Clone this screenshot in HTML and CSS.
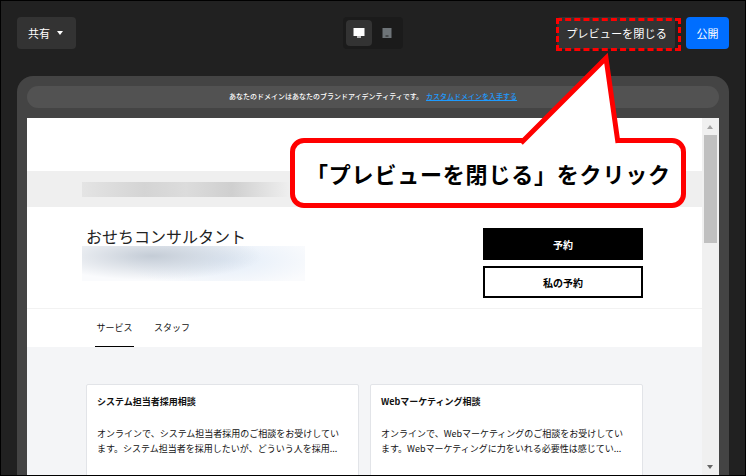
FILE: index.html
```html
<!DOCTYPE html>
<html lang="ja">
<head>
    <meta charset="UTF-8">
    <title>プレビュー</title>
    <link rel="stylesheet" href="styles.css">
</head>
<body>
    <div class="shot">
        <!-- ツールバー -->
        <header class="toolbar">
            <button class="tool-btn share-btn">共有 <span class="caret"></span></button>
            <div class="device-switch">
                <span class="device-btn active">
                    <svg width="12" height="12" viewBox="0 0 12 12"><path d="M.5 1h11v8H.5z" fill="#fff"/><path d="M4 9h4v2H4z" fill="#bbb"/></svg>
                </span>
                <span class="device-btn">
                    <svg width="10" height="12" viewBox="0 0 10 12"><path d="M.5 1h9v10h-9z" fill="#6e7478"/><path d="M3.5 8.500h3v1h-3z" fill="#222"/></svg>
                </span>
            </div>
            <div class="toolbar-right">
                <button class="tool-btn close-btn">プレビューを閉じる</button>
                <button class="tool-btn publish-btn">公開</button>
            </div>
        </header>

        <!-- プレビュー枠 -->
        <div class="preview-frame">
            <div class="domain-bar">
                あなたのドメインはあなたのブランドアイデンティティです。<a href="#">カスタムドメインを入手する</a>
            </div>
            <div class="preview-window">
                <div class="page">
                    <div class="page-top"></div>
                    <div class="page-strip"><div class="blur-gray"></div></div>
                    <div class="page-head">
                        <div class="head-text">
                            <h1>おせちコンサルタント</h1>
                            <div class="blur-blue"></div>
                        </div>
                        <div class="head-actions">
                            <button class="book-btn">予約</button>
                            <button class="book-btn outline">私の予約</button>
                        </div>
                    </div>
                    <nav class="tabs">
                        <span class="tab current">サービス</span>
                        <span class="tab">スタッフ</span>
                    </nav>
                    <div class="services">
                        <div class="service-card">
                            <h2>システム担当者採用相談</h2>
                            <p>オンラインで、システム担当者採用のご相談をお受けしてい<br>ます。システム担当者を採用したいが、どういう人を採用...</p>
                        </div>
                        <div class="service-card">
                            <h2>Webマーケティング相談</h2>
                            <p>オンラインで、Webマーケティングのご相談をお受けしてい<br>ます。Webマーケティングに力をいれる必要性は感じてい...</p>
                        </div>
                    </div>
                </div>
                <div class="scrollbar">
                    <span class="arrow up"></span>
                    <span class="thumb"></span>
                    <span class="arrow down"></span>
                </div>
            </div>
        </div>

        <!-- 注釈 -->
        <div class="dash-box"></div>
        <div class="callout">
            <svg class="callout-tail" width="120" height="100" viewBox="0 0 120 100">
                <path d="M10 95 L95 10 L107 95" fill="#fff" stroke="#f00" stroke-width="5"/>
            </svg>
            <p class="callout-text">「プレビューを閉じる」をクリック</p>
        </div>
    </div>
</body>
</html>
```

FILE: styles.css
```css
* {
    box-sizing: border-box;
}

body {
    margin: 0;
    font-family: "Noto Sans CJK JP", "Liberation Sans", sans-serif;
}

.shot {
    position: relative;
    width: 746px;
    height: 476px;
    overflow: hidden;
    background: #212121;
    border: 1px solid #000;
    display: flex;
    flex-direction: column;
}

/* ツールバー */
.toolbar {
    height: 75px;
    flex-shrink: 0;
    padding: 16px 16px 0;
    display: flex;
    justify-content: space-between;
    align-items: flex-start;
    position: relative;
}

.tool-btn {
    height: 32px;
    border: none;
    border-radius: 4px;
    background: #333;
    color: #fff;
    font-family: inherit;
    font-size: 11px;
    padding: 0 11px;
    white-space: nowrap;
}

.share-btn {
    width: 59px;
    display: flex;
    align-items: center;
    gap: 7px;
}

.caret {
    border-width: 4px 3.5px 0;
    border-style: solid;
    border-color: #fff transparent transparent;
}

.device-switch {
    position: absolute;
    left: 342px;
    top: 16px;
    display: flex;
    gap: 2px;
    padding: 3px;
    background: #1b1b1b;
    border-radius: 4px;
}

.device-btn {
    width: 26px;
    height: 26px;
    border-radius: 4px;
    display: flex;
    align-items: center;
    justify-content: center;
}

.device-btn.active {
    background: #333;
}

.toolbar-right {
    display: flex;
    gap: 11px;
}

.close-btn {
    width: 118px;
    padding: 0 0 0 1px;
    font-size: 11.2px;
}

.publish-btn {
    width: 43px;
    background: #006eff;
    padding: 0;
}

/* プレビュー枠 */
.preview-frame {
    margin: 0 16px;
    flex: 1;
    min-height: 0;
    background: #444;
    border-radius: 16px 16px 0 0;
    padding: 10px 10px 0;
    display: flex;
    flex-direction: column;
}

.domain-bar {
    height: 22px;
    margin-bottom: 10px;
    border-radius: 11px;
    background: #525252;
    color: #fff;
    font-size: 7px;
    font-weight: 500;
    line-height: 21px;
    text-align: center;
    flex-shrink: 0;
}

.domain-bar a {
    color: #1e9bff;
    margin-left: 3px;
}

.preview-window {
    flex: 1;
    min-height: 0;
    display: flex;
    background: #fff;
    overflow: hidden;
}

.page {
    flex: 1;
    min-width: 0;
    overflow: hidden;
}

.page-top {
    height: 53px;
}

.page-strip {
    height: 36px;
    background: #efefef;
    padding: 11px 0 0 55px;
}

.blur-gray {
    width: 208px;
    height: 15px;
    background: linear-gradient(90deg, #e4e4e4, #d4d4d4 30%, #dcdcdc 50%, #cfcfcf 72%, #efefef);
}

.page-head {
    height: 101px;
    padding: 20px 59px 0;
    display: flex;
    justify-content: space-between;
}

.head-text {
    margin-left: -4px;
}

.head-text h1 {
    margin: 0;
    padding-left: 4px;
    font-size: 16px;
    font-weight: 400;
    line-height: 19px;
    color: #222;
}

.blur-blue {
    width: 223px;
    height: 35px;
    background:
        radial-gradient(ellipse 110px 24px at 70px 10px, #c4ccd6, rgba(205, 214, 226, 0)),
        radial-gradient(ellipse 100px 28px at 140px 14px, #e2ecf8, rgba(255, 255, 255, 0)),
        #fafbfd;
}

.head-actions {
    width: 160px;
    margin-top: 1px;
    display: flex;
    flex-direction: column;
    gap: 6px;
}

.book-btn {
    height: 32px;
    background: #000;
    color: #fff;
    border: 2px solid #000;
    font-family: inherit;
    font-size: 10px;
    font-weight: 700;
}

.book-btn.outline {
    background: #fff;
    color: #000;
}

.tabs {
    height: 39px;
    border-top: 1px solid #f2f2f2;
    padding-left: 68px;
    display: flex;
    gap: 20px;
}

.tab {
    height: 38px;
    font-size: 9px;
    line-height: 38px;
    color: #111;
    white-space: nowrap;
}

.tab.current {
    width: 39px;
    text-align: center;
    border-bottom: 1px solid #000;
}

.services {
    height: 200px;
    background: #f4f5f7;
    padding: 37px 59px 0;
    display: grid;
    grid-template-columns: 273px 273px;
    gap: 11px;
}

.service-card {
    background: #fff;
    border: 1px solid #e2e4e8;
    border-radius: 2px;
    padding: 10px 5px 10px 10px;
}

.service-card h2 {
    margin: 0 0 17px;
    font-size: 9px;
    line-height: 14px;
    font-weight: 700;
    color: #111;
}

.service-card p {
    margin: 0;
    font-size: 9px;
    line-height: 15px;
    color: #111;
}

.scrollbar {
    width: 17px;
    background: #f0f0f0;
    position: relative;
    flex-shrink: 0;
}

.thumb {
    position: absolute;
    left: 2px;
    top: 17px;
    width: 13px;
    height: 108px;
    background: #c0c0c0;
}

.arrow {
    position: absolute;
    left: 5px;
    border-style: solid;
    border-color: transparent;
}

.arrow.up {
    top: 7px;
    border-width: 0 3.5px 4px;
    border-bottom-color: #a3a3a3;
}

.arrow.down {
    bottom: 6px;
    border-width: 4px 3.5px 0;
    border-top-color: #666;
}

/* 注釈 */
.dash-box {
    position: absolute;
    left: 555px;
    top: 17px;
    width: 125px;
    height: 33px;
    border: 3px dashed #f00;
}

.callout {
    position: absolute;
    left: 289px;
    top: 137px;
    width: 396px;
    height: 70px;
    background: #fff;
    border: 5px solid #f00;
    border-radius: 14px;
}

.callout-tail {
    position: absolute;
    left: 216px;
    top: -95px;
    overflow: visible;
}

.callout-text {
    position: relative;
    margin: 0;
    padding-left: 11px;
    font-size: 22px;
    font-weight: 700;
    letter-spacing: 0.8px;
    line-height: 60px;
    color: #000;
    white-space: nowrap;
}
```
